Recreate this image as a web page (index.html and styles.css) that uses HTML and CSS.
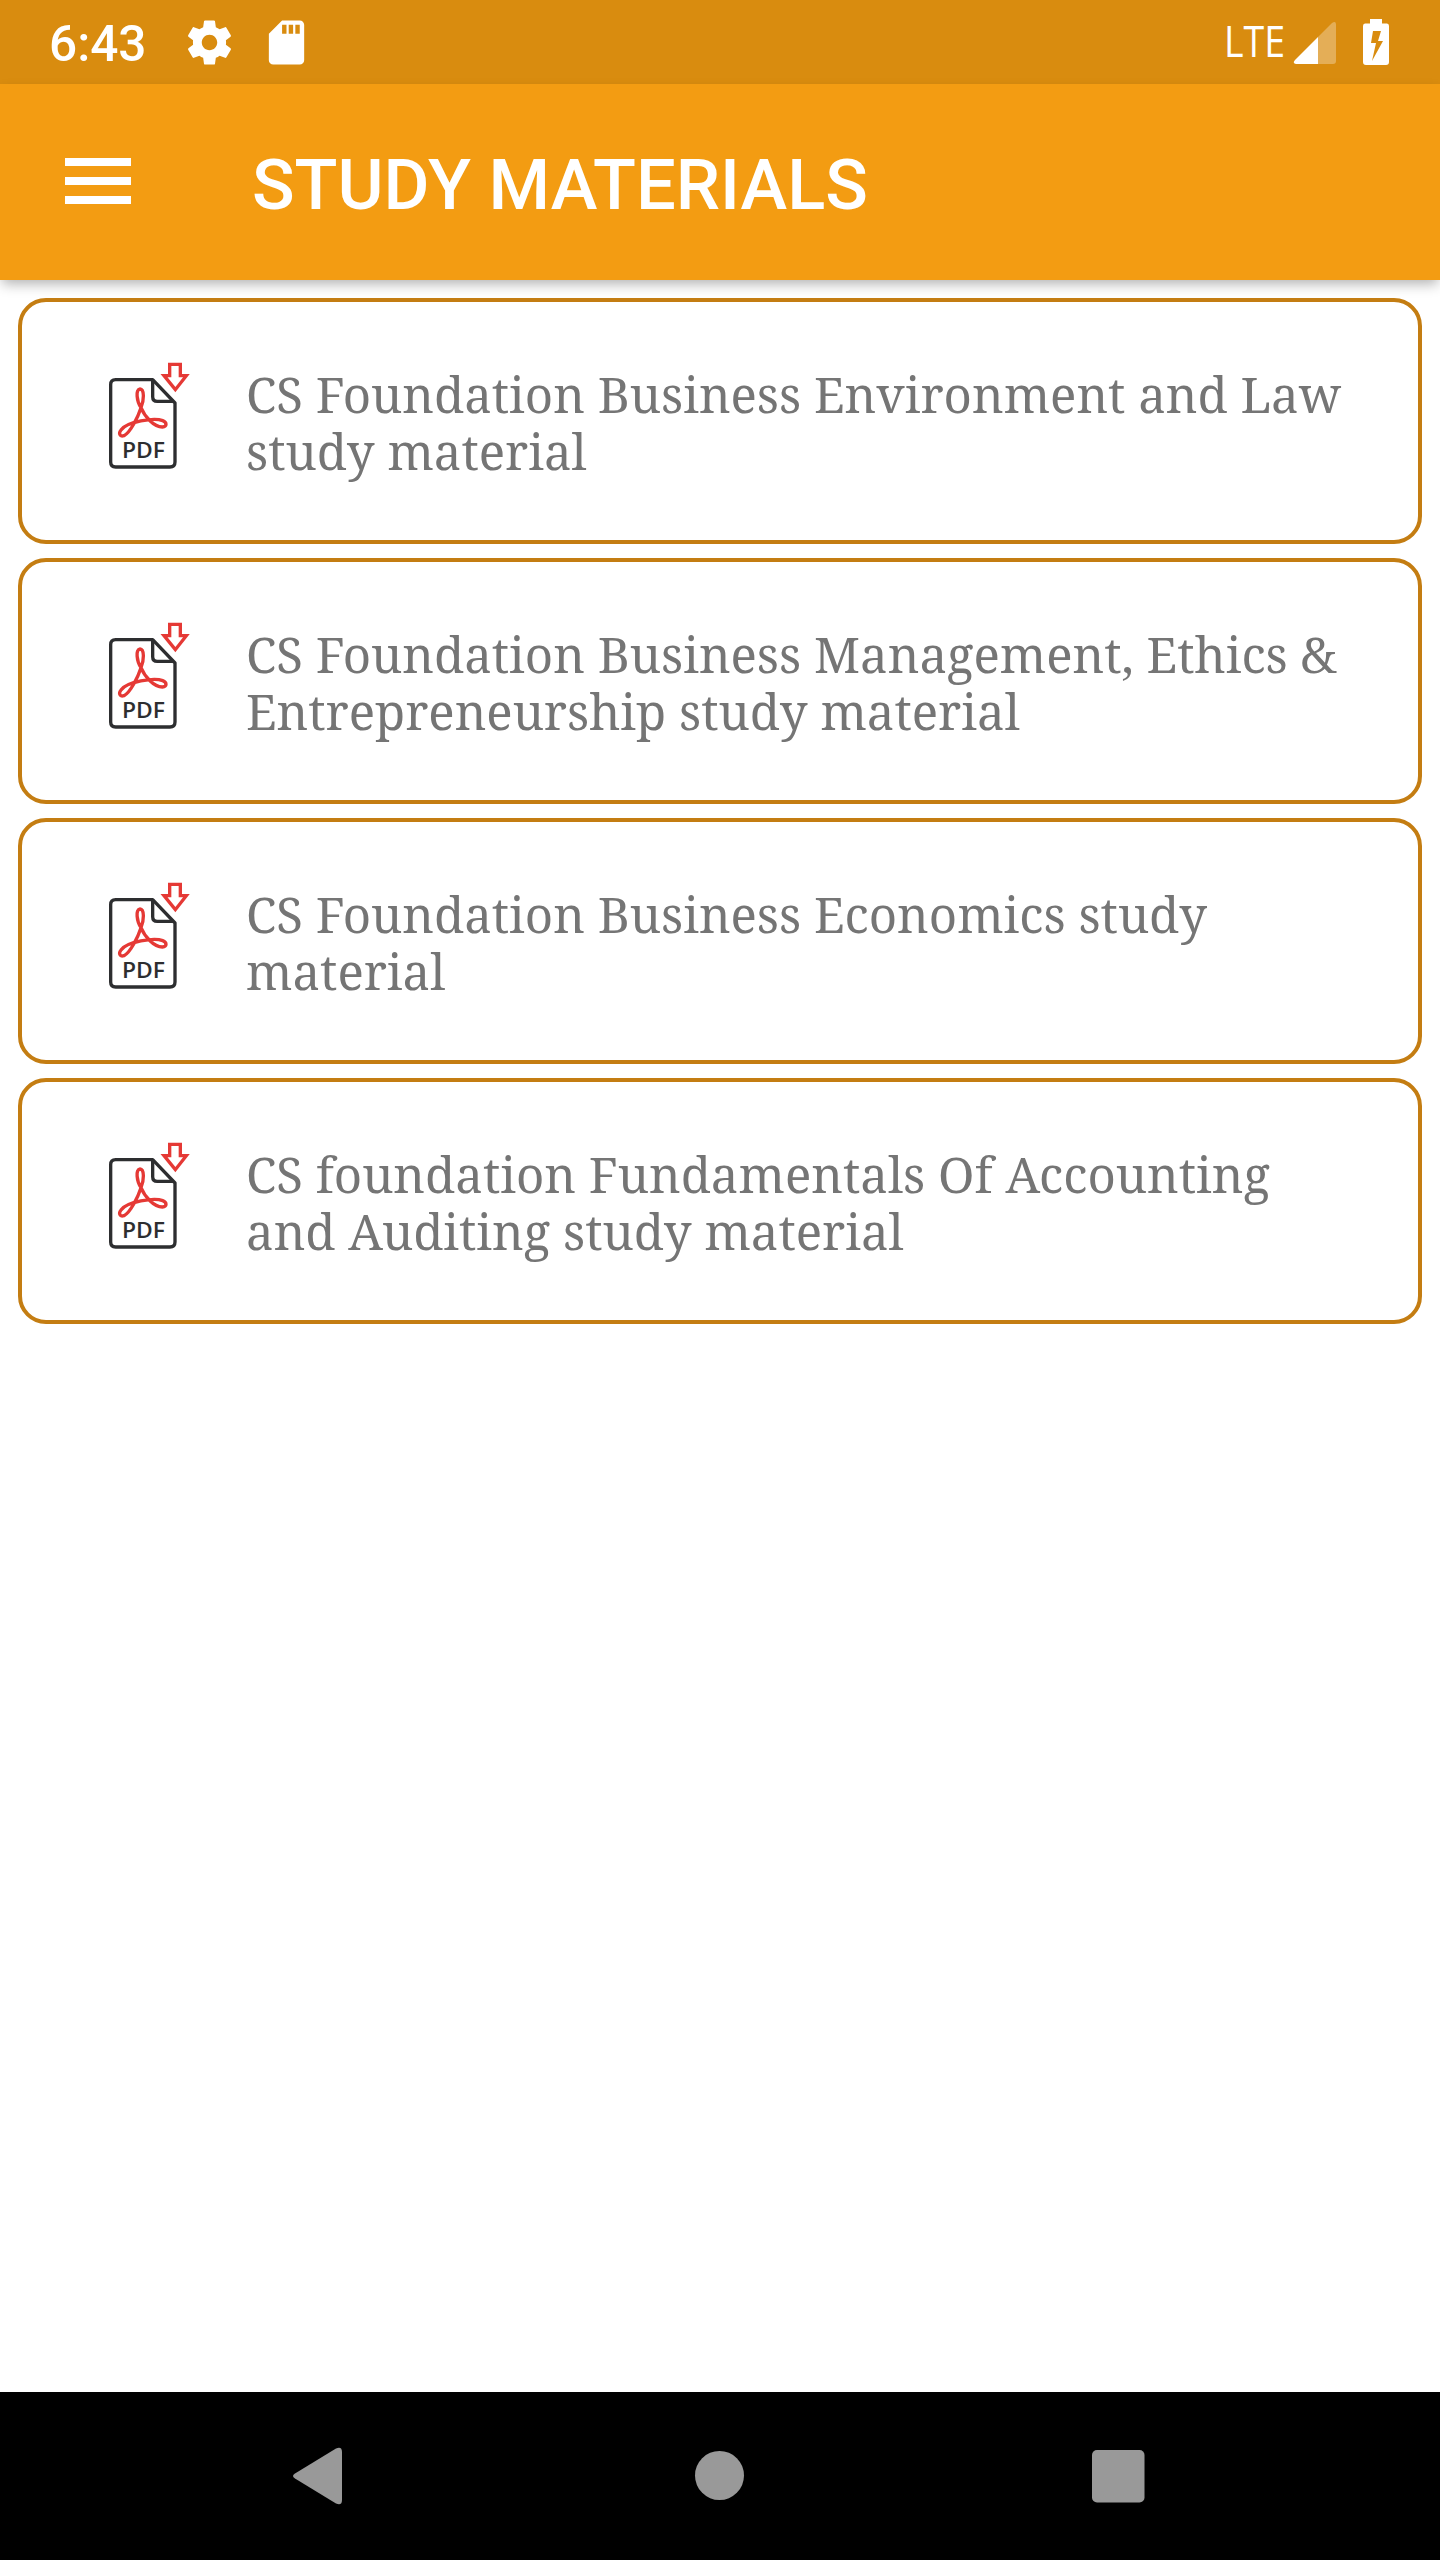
FILE: index.html
```
<!DOCTYPE html>
<html lang="en">
<head>
  <meta charset="UTF-8" />
  <meta name="viewport" content="width=device-width, initial-scale=1.0"/>
  <title>Study Materials</title>
  <link rel="stylesheet" href="styles.css">
</head>
<body>
  <!-- shared pdf icon -->
  <svg class="defs" width="0" height="0">
    <symbol id="pdf" viewBox="0 0 420 480">
      <path class="page" d="M218 119H107Q92 119 92 134V366Q92 381 107 381H270Q285 381 285 366V189Z"/>
      <path class="page" d="M218 119V170Q218 184 232 184H282"/>
      <path class="swirl" d="M183 203C170 184 166 148 180 147C194 148 192 182 183 203C174 231 151 278 132 287C119 291 115 280 123 270C141 245 222 232 248 242C261 247 262 260 247 261C222 261 194 230 183 203Z"/>
      <path class="swirl" d="M269 73H301V107H319L286 149L252 107H269Z"/>
      <text x="126" y="353" textLength="129" lengthAdjust="spacingAndGlyphs">PDF</text>
    </symbol>
  </svg>

  <div class="status-bar">
    <span class="time">6:43</span>
    <svg class="status-icon" viewBox="0 0 24 24"><path d="M19.43 12.98c.04-.32.07-.64.07-.98s-.03-.66-.07-.98l2.11-1.65c.19-.15.24-.42.12-.64l-2-3.46c-.12-.22-.39-.3-.61-.22l-2.49 1c-.52-.4-1.08-.73-1.69-.98l-.38-2.65A.49.49 0 0 0 14 2h-4c-.25 0-.46.18-.49.42l-.38 2.65c-.61.25-1.17.59-1.69.98l-2.49-1c-.23-.09-.49 0-.61.22l-2 3.46c-.13.22-.07.49.12.64l2.11 1.65c-.04.32-.07.65-.07.98s.03.66.07.98l-2.11 1.65c-.19.15-.24.42-.12.64l2 3.46c.12.22.39.3.61.22l2.49-1c.52.4 1.08.73 1.69.98l.38 2.65c.03.24.24.42.49.42h4c.25 0 .46-.18.49-.42l.38-2.65c.61-.25 1.17-.59 1.69-.98l2.49 1c.23.09.49 0 .61-.22l2-3.46c.12-.22.07-.49-.12-.64l-2.11-1.65zM12 15.5c-1.93 0-3.5-1.57-3.5-3.5s1.57-3.5 3.5-3.5 3.5 1.57 3.5 3.5-1.57 3.5-3.5 3.5z"/></svg>
    <svg class="status-icon" viewBox="0 0 24 24"><path d="M18 2h-8L4.02 8 4 20c0 1.1.9 2 2 2h12c1.1 0 2-.9 2-2V4c0-1.1-.9-2-2-2zm-6 6h-2V4h2v4zm3 0h-2V4h2v4zm3 0h-2V4h2v4z"/></svg>
    <svg class="status-right" viewBox="0 0 170 84">
      <text x="10" y="57" textLength="61" lengthAdjust="spacingAndGlyphs">LTE</text>
      <path opacity=".3" d="M104 37L118 23Q122 20 122 25V61Q122 64 119 64H104Z"/>
      <path d="M104 37V64H82Q78 63 81 60Z"/>
      <path fill-rule="evenodd" d="M156 19H168V23.5H173Q175 23.5 175 26V62Q175 65 172 65H152Q149 65 149 62V26Q149 23.5 151 23.5H156ZM159 31L157 43H162L158 61L169 41H164L167 31Z"/>
    </svg>
  </div>

  <header class="app-bar">
    <div class="menu">
      <span></span>
      <span></span>
      <span></span>
    </div>
    <h1 class="title">STUDY MATERIALS</h1>
  </header>

  <main class="list">
    <div class="card">
      <svg class="pdf-icon"><use href="#pdf"/></svg>
      <p>CS Foundation Business Environment and Law<br>study material</p>
    </div>
    <div class="card">
      <svg class="pdf-icon"><use href="#pdf"/></svg>
      <p>CS Foundation Business Management, Ethics &amp;<br>Entrepreneurship study material</p>
    </div>
    <div class="card">
      <svg class="pdf-icon"><use href="#pdf"/></svg>
      <p>CS Foundation Business Economics study<br>material</p>
    </div>
    <div class="card">
      <svg class="pdf-icon"><use href="#pdf"/></svg>
      <p>CS foundation Fundamentals Of Accounting<br>and Auditing study material</p>
    </div>
  </main>

  <nav class="nav-bar">
    <svg viewBox="0 0 60 60"><path d="M7 27.5L48 2.5Q54 0 54 6V54Q54 60 48 57.5L7 32.5Q3 30 7 27.5Z"/></svg>
    <svg viewBox="0 0 60 60"><circle cx="31.5" cy="29.5" r="24.5"/></svg>
    <svg viewBox="0 0 60 60"><rect x="4" y="4" width="52.5" height="52.5" rx="5"/></svg>
  </nav>
</body>
</html>
```
FILE: styles.css
```
* {
  margin: 0;
  padding: 0;
  box-sizing: border-box;
}

body {
  height: 2560px;
  display: flex;
  flex-direction: column;
  background: #fff;
  font-family: Roboto, sans-serif;
  overflow: hidden;
}

.defs {
  position: absolute;
}

.status-bar {
  height: 84px;
  padding-left: 49px;
  display: flex;
  align-items: center;
  background: #d98c0f;
  color: #fff;
  fill: #fff;
}

.time {
  width: 134px;
  font-size: 49.5px;
  font-weight: 500;
  line-height: 84px;
  padding-top: 3px;
}

.status-icon {
  width: 53px;
  height: 53px;
  margin-right: 24px;
}

.status-right {
  width: 170px;
  height: 84px;
  margin-left: auto;
  margin-right: 56px;
  overflow: visible;
  font-family: "Open Sans", sans-serif;
  font-size: 43px;
}

.app-bar {
  position: relative;
  height: 196px;
  padding-left: 65px;
  display: flex;
  align-items: center;
  background: #f39c12;
  box-shadow: 0 6px 12px -2px rgba(0, 0, 0, 0.3);
}

.menu {
  width: 66px;
  height: 46px;
  margin-right: 121px;
  margin-bottom: 3px;
  display: flex;
  flex-direction: column;
  justify-content: space-between;
}

.menu span {
  height: 8px;
  background: #fff;
}

.title {
  color: #fff;
  font-size: 70.4px;
  font-weight: 500;
  padding-top: 5px;
}

.list {
  flex: 1;
  padding: 18px;
  display: flex;
  flex-direction: column;
  gap: 14px;
}

.card {
  height: 246px;
  padding: 38px 0 0 58px;
  display: flex;
  border: 4px solid #c47d12;
  border-radius: 28px;
}

.pdf-icon {
  width: 140px;
  height: 160px;
  margin-right: 26px;
  flex-shrink: 0;
}

.page {
  fill: none;
  stroke: #2d2e30;
  stroke-width: 10;
  stroke-linejoin: round;
}

.swirl {
  fill: none;
  stroke: #e53935;
  stroke-width: 10;
}

#pdf text {
  font-family: "Open Sans", sans-serif;
  font-size: 64px;
  font-weight: 600;
  fill: #2d2e30;
}

.card p {
  color: #757575;
  font-family: "Noto Serif", "DejaVu Serif", serif;
  font-size: 49.15px;
  line-height: 57px;
  padding-top: 25px;
  white-space: nowrap;
}

.nav-bar {
  height: 168px;
  padding: 0 292px 0 288px;
  display: flex;
  align-items: center;
  justify-content: space-between;
  background: #000;
  fill: #999;
}

.nav-bar svg {
  width: 60px;
  height: 60px;
}
```
